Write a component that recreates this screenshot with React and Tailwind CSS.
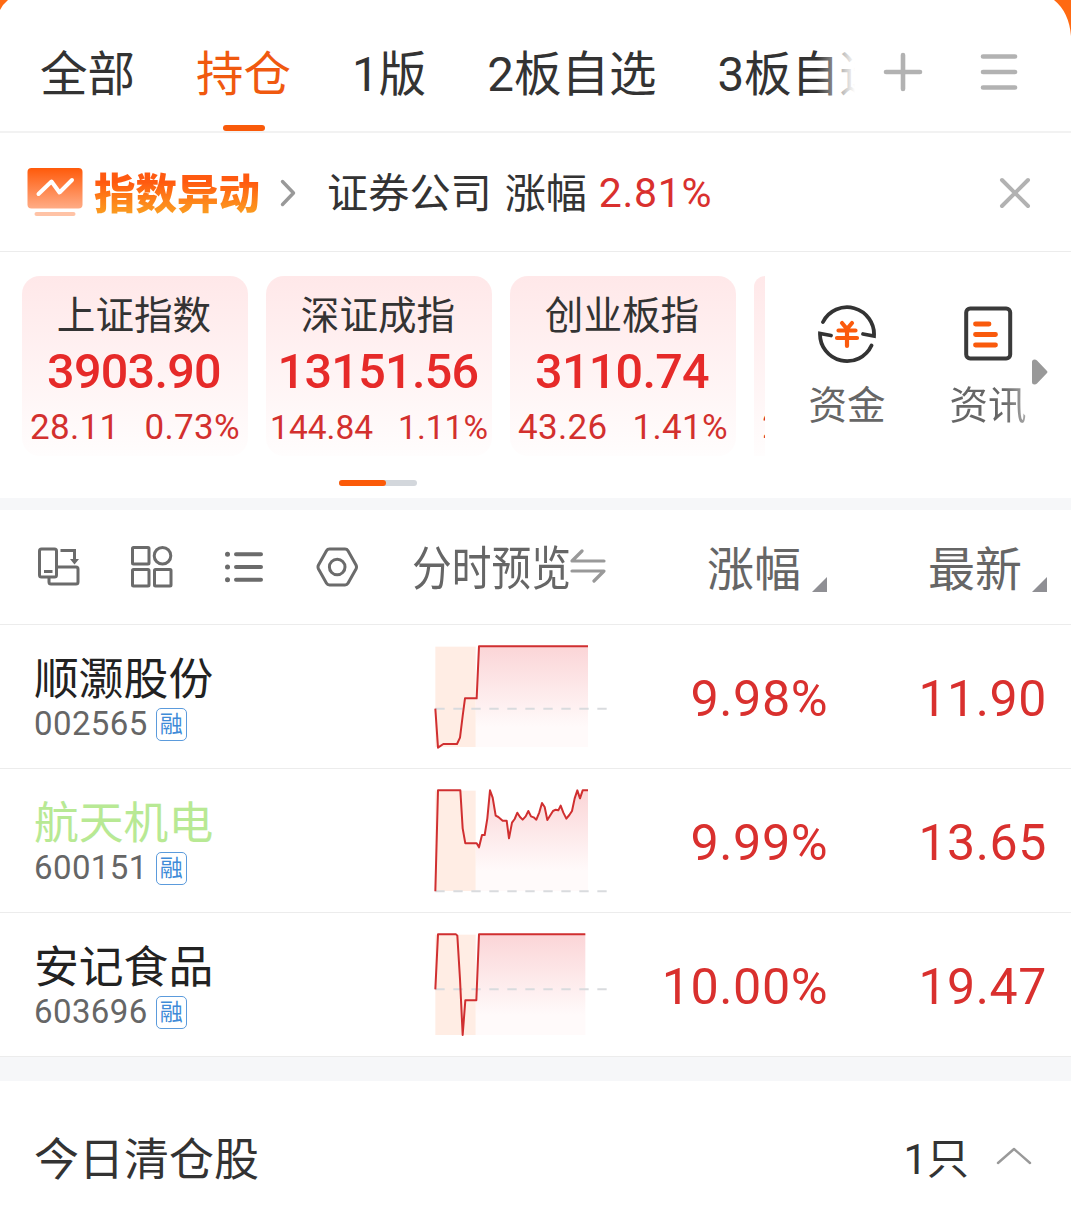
const TABS = ['全部', '持仓', '1版', '2板自选', '3板自选']

const INDICES = [
  { name: '上证指数', value: '3903.90', change: '28.11', pct: '0.73%' },
  { name: '深证成指', value: '13151.56', change: '144.84', pct: '1.11%' },
  { name: '创业板指', value: '3110.74', change: '43.26', pct: '1.41%' },
]

// chart coordinates live in a 600 x 390 box, the price line ends at `end`
const STOCKS = [
  {
    name: '顺灏股份',
    code: '002565',
    pct: '9.98%',
    price: '11.90',
    end: 504,
    base: 233,
    line: '46,233 54,350 70,339 111,339 120,320 128,255 135,202 170,202 177,46 504,46',
  },
  {
    name: '航天机电',
    code: '600151',
    pct: '9.99%',
    price: '13.65',
    held: true,
    end: 504,
    base: 349,
    line: '46,349 54,46 121,46 128,160 136,205 170,205 177,217 186,180 194,180 202,130 210,46 218,68 227,122 235,126 248,137 260,137 267,190 276,143 284,132 292,113 300,126 308,134 317,124 325,108 333,124 341,127 349,134 358,112 366,84 374,96 382,135 390,122 399,108 407,104 415,106 422,92 430,113 439,131 448,120 456,108 464,70 472,46 480,70 488,46 504,46',
  },
  {
    name: '安记食品',
    code: '603696',
    pct: '10.00%',
    price: '19.47',
    end: 496,
    base: 211,
    line: '46,211 54,46 108,46 112,50 120,180 128,348 136,244 169,244 177,46 496,46',
  },
]

function Tabs() {
  return (
    <div className="flex h-[133px] items-center border-b-2 border-[#f2f2f2] pl-10">
      <div className="relative h-full w-[815px] shrink-0 overflow-hidden">
        <div className="flex h-full w-max gap-[61px]">
          {TABS.map((tab) => (
            <div
              key={tab}
              className={`relative flex h-full shrink-0 items-center pt-[21px] text-[47.5px] leading-none ${
                tab === '持仓' ? 'text-[#f0590f]' : 'text-[#333]'
              }`}
            >
              {tab}
              {tab === '持仓' && (
                <span className="absolute bottom-0 left-1/2 h-[6px] w-[42px] -translate-x-1/2 rounded-full bg-[#f95a0a]" />
              )}
            </div>
          ))}
        </div>
        <div className="absolute inset-y-0 right-0 w-[48px] bg-linear-to-r from-white/0 from-20% to-white" />
      </div>
      <svg viewBox="0 0 40 40" className="ml-7 mt-3 size-10 shrink-0" stroke="#b2b2b2" strokeWidth="4.6" strokeLinecap="round">
        <path d="M3 20h34M20 3v34" />
      </svg>
      <svg viewBox="0 0 40 40" className="ml-14 mt-3 size-10 shrink-0" stroke="#b2b2b2" strokeWidth="4.6" strokeLinecap="round">
        <path d="M4 4.500h32M4 20h32M4 35.500h32" />
      </svg>
    </div>
  )
}

function AlertBar() {
  return (
    <div className="flex h-[119px] items-center border-b border-[#ececec] pl-[27px] pr-10">
      <svg viewBox="0 0 56 50" className="h-[50px] w-14 shrink-0" fill="none">
        <defs>
          <linearGradient id="alert" x1="0" y1="0" x2="0" y2="1">
            <stop offset="0" stopColor="#ff5a0a" />
            <stop offset="1" stopColor="#ffac86" />
          </linearGradient>
        </defs>
        <rect x="0.500" y="1" width="55" height="40.500" rx="4" fill="url(#alert)" />
        <path d="M11.500 27l13-12.500 8 11L45 13" stroke="#fff" strokeWidth="4" strokeLinecap="round" strokeLinejoin="round" />
        <rect x="7.500" y="45" width="41" height="4" rx="2" fill="#ffc3a6" />
      </svg>
      <span className="ml-[11px] mt-[5px] bg-linear-to-b from-[#ff5a10] from-25% to-[#fb9a20] to-85% bg-clip-text text-[41.500px] font-black leading-[50px] text-transparent">
        指数异动
      </span>
      <svg viewBox="0 0 16 28" className="ml-5 mt-px h-7 w-4" fill="none" stroke="#999" strokeWidth="3.400" strokeLinecap="round" strokeLinejoin="round">
        <path d="M2.500 2.500l11 11.500-11 11.500" />
      </svg>
      <span className="ml-[31px] mt-[4px] text-[41.200px] leading-[50px] text-[#333]">证券公司</span>
      <span className="ml-[13px] mt-[4px] text-[41px] leading-[50px] text-[#333]">涨幅</span>
      <span className="ml-3 mt-px text-[41px] leading-[50px] tracking-[0.7px] text-[#d9302e]">2.81%</span>
      <svg viewBox="0 0 32 32" className="ml-auto mt-0.5 size-8" stroke="#b2b2b2" strokeWidth="4" strokeLinecap="round">
        <path d="M3 3l26 26M29 3L3 29" />
      </svg>
    </div>
  )
}

function IndexCard({ item }) {
  // long numbers get a slightly smaller bottom line so they stay inside the card
  const long = item.change.length > 5
  return (
    <div className="flex h-[180px] w-[226px] shrink-0 flex-col items-center rounded-[18px] bg-linear-to-b from-[#ffe8e9] to-[#fffdfd] pt-[17px]">
      <span className="-ml-[2px] text-[38.600px] leading-[46px] text-[#333]">{item.name}</span>
      <span className="-ml-[2px] mt-[6px] text-[48.500px] font-medium leading-[54px] tracking-[-0.7px] text-[#e62a29]">{item.value}</span>
      <div
        className={`mt-1.5 flex gap-[25px] whitespace-nowrap leading-[46px] text-[#d3302e] ${
          long ? 'text-[33.500px]' : 'text-[35px] tracking-[0.3px]'
        }`}
      >
        <span>{item.change}</span>
        <span>{item.pct}</span>
      </div>
    </div>
  )
}

function FundIcon() {
  return (
    <svg viewBox="0 0 60 60" className="size-[60px]" fill="none" strokeLinecap="round" strokeLinejoin="round">
      <g stroke="#333" strokeWidth="3.800" strokeLinejoin="miter">
        <path d="M6 18A27 27 0 0 1 57 32l-11-2" />
        <path d="M54.500 41.500A27 27 0 0 1 3 29.500l11 2" />
      </g>
      <path d="M25 19l5 6 5-6M21.500 26.500h17M20 34h20M30 27v15" stroke="#fb5a0c" strokeWidth="4.200" />
    </svg>
  )
}

function NewsIcon() {
  return (
    <svg viewBox="0 0 60 60" className="size-[60px]" fill="none" strokeLinecap="round">
      <rect x="8.200" y="4.500" width="44" height="50" rx="4" stroke="#3a3a3a" strokeWidth="4" />
      <path d="M17.500 20h13.500M17.500 30.500h20M17.500 41h20" stroke="#f95a0c" strokeWidth="4.800" />
    </svg>
  )
}

function IndexPanel() {
  return (
    <div className="h-[246px] pt-6">
      <div className="flex">
        <div className="flex w-[765px] shrink-0 gap-[18px] overflow-hidden pl-[22px]">
          {INDICES.map((item) => (
            <IndexCard key={item.name} item={item} />
          ))}
          <div className="flex h-[180px] w-[11px] shrink-0 items-end overflow-hidden rounded-tl-[18px] bg-linear-to-b from-[#ffe8e9] to-[#fffdfd] pb-1.5 pl-[8px] text-[35px] leading-[46px] text-[#d3302e]">
            2
          </div>
        </div>
        <div className="relative flex flex-1 gap-[63px] pl-[43px] pt-7 text-[38.500px] leading-[46px] text-[#666]">
          <div className="flex w-[78px] shrink-0 flex-col items-center gap-[19px]">
            <FundIcon />
            资金
          </div>
          <div className="flex w-[78px] shrink-0 flex-col items-center gap-[19px]">
            <NewsIcon />
            <span className="bg-linear-to-r from-[#666] from-70% to-[#aaa] bg-clip-text text-transparent">资讯</span>
          </div>
          <svg viewBox="0 0 16 26" className="absolute left-[267px] top-[83px] h-[26px] w-4" fill="#999">
            <path d="M0 3Q0 .5 2.500 .5Q4 .5 5 1.500L15 12Q16 13 15 14L5 24.500Q4 25.500 2.500 25.500Q0 25.500 0 23Z" />
          </svg>
        </div>
      </div>
      <div className="ml-[339px] mt-6 h-[6px] w-[78px] rounded-full bg-[#d3d7dc]">
        <div className="h-full w-[47px] rounded-full bg-[#fb5a08]" />
      </div>
    </div>
  )
}

function SortMark() {
  return (
    <svg viewBox="0 0 15 15" className="mb-8 size-[15px] self-end" fill="#8f8f94">
      <path d="M15 0v15H0z" />
    </svg>
  )
}

function ListHeader() {
  return (
    <div className="flex h-[115px] items-center border-b border-[#ececec] pl-[38px] pr-6 text-[47px] leading-none text-[#666]">
      <div className="flex w-[374px] shrink-0 gap-[50.500px]">
        <svg viewBox="0 0 42 42" className="size-[42px]" fill="none" stroke="#6b6b6b" strokeWidth="3">
          <rect x="1.500" y="3" width="17" height="28" rx="2" />
          <path d="M6 25.500h8.500M11 31.500v4.500q0 2 2 2h25q2 0 2-2V23q0-2-2-2H19" />
          <path d="M22.500 4.500h14v10" />
          <path d="M32 13h9l-4.500 5.500z" fill="#6b6b6b" stroke="none" />
        </svg>
        <svg viewBox="0 0 42 42" className="size-[42px]" fill="none" stroke="#6b6b6b" strokeWidth="3">
          <rect x="1.500" y="1.500" width="16.500" height="16.500" rx="1" />
          <circle cx="31.500" cy="9.800" r="8.300" />
          <rect x="1.500" y="23.500" width="16.500" height="16.500" rx="1" />
          <rect x="23.500" y="23.500" width="16.500" height="16.500" rx="1" />
        </svg>
        <svg viewBox="0 0 42 42" className="size-[42px]" fill="none" stroke="#6b6b6b" strokeWidth="4" strokeLinecap="round">
          <path d="M13 8.300h25M13 21h25M13 33.800h25" />
          <path d="M4.500 8.200h.01M4.500 21h.01M4.500 33.800h.01" strokeWidth="5" />
        </svg>
        <svg viewBox="0 0 42 42" className="size-[42px]" fill="none" stroke="#6b6b6b" strokeWidth="3" strokeLinejoin="round">
          <path d="M13.500 3h15.500q2 0 3 1.700l8 14.300q1 2 0 4l-8 14.300q-1 1.700-3 1.700H13.500q-2 0-3-1.700l-8-14.300q-1-2 0-4l8-14.300q1-1.700 3-1.700z" />
          <circle cx="21.200" cy="21" r="7.800" />
        </svg>
      </div>
      <div className="w-[158px] shrink-0 pt-[3px]">
        <span className="block w-max origin-left scale-x-[0.845]">分时预览</span>
      </div>
      <svg viewBox="0 0 36 34" className="-mt-[3px] h-[34px] w-9 shrink-0" fill="none" stroke="#999" strokeWidth="3.200" strokeLinecap="round" strokeLinejoin="round">
        <path d="M34 12H2L12 2M2 22h32L24 32" />
      </svg>
      <div className="ml-[101px] flex h-full items-center gap-[11px]">
        <span className="pt-[4px]">涨幅</span>
        <SortMark />
      </div>
      <div className="ml-auto flex h-full items-center gap-[10px]">
        <span className="pt-[4px]">最新</span>
        <SortMark />
      </div>
    </div>
  )
}

function Sparkline({ stock }) {
  const { line, end, base } = stock
  return (
    <svg viewBox="0 0 600 390" className="mb-[2px] h-[130px] w-[200px] shrink-0" fill="none">
      <defs>
        <linearGradient id="area" gradientUnits="userSpaceOnUse" x1="0" y1="46" x2="0" y2="348">
          <stop offset="0" stopColor="#fbd5d7" />
          <stop offset="0.800" stopColor="#fffafa" />
          <stop offset="1" stopColor="#fffafa" />
        </linearGradient>
        <clipPath id={`late-${stock.code}`}>
          <rect x="167" y="0" width="433" height="390" />
        </clipPath>
      </defs>
      <polygon points={`${line} ${end},348 46,348`} fill="url(#area)" clipPath={`url(#late-${stock.code})`} />
      <rect x="46" y="47" width="121" height="301" fill="#ffede4" />
      <path d={`M46 ${base}H560`} stroke="#d9dbde" strokeWidth="6" strokeDasharray="28 26" />
      <polyline points={line} stroke="#d02f30" strokeWidth="6" strokeLinejoin="round" />
    </svg>
  )
}

function StockRow({ stock }) {
  return (
    <div className="flex h-36 items-center border-b border-[#ececec] pl-[34px] pr-6">
      <div className="w-[386px] shrink-0">
        <div className={`pt-[3px] text-[44.800px] leading-[52px] ${stock.held ? 'text-[#b8e994]' : 'text-[#222]'}`}>{stock.name}</div>
        <div className="flex items-center gap-2 text-[33px] leading-[36px] tracking-[0.4px] text-[#666]">
          {stock.code}
          <span className="flex h-[33px] w-[31px] items-center justify-center rounded-[5px] border-[1.500px] border-[#5b9bdc] text-[23px] leading-none tracking-normal text-[#3f8bd8]">
            融
          </span>
        </div>
      </div>
      <Sparkline stock={stock} />
      <span className="mt-[5px] w-[208px] shrink-0 text-right text-[50.300px] leading-none tracking-[0.5px] text-[#d9302e]">{stock.pct}</span>
      <span className="ml-auto mt-[5px] text-[50px] leading-none tracking-[0.6px] text-[#d9302e]">{stock.price}</span>
    </div>
  )
}

function ClearedToday() {
  return (
    <div className="flex h-[143px] items-center pl-[34px] pr-[39px] pt-[15px] text-[45px] leading-none text-[#333]">
      今日清仓股
      <span className="ml-auto text-[42px]">1只</span>
      <svg viewBox="0 0 36 18" className="mb-[9px] ml-[27px] h-[18px] w-9" fill="none" stroke="#999" strokeWidth="2.400" strokeLinecap="round" strokeLinejoin="round">
        <path d="M2 16L18 2l16 14" />
      </svg>
    </div>
  )
}

function App() {
  return (
    <div className="relative h-[1224px] w-[1071px] overflow-hidden bg-white font-['Roboto','Noto_Sans_CJK_SC',sans-serif]">
      <svg viewBox="0 0 8 10" className="absolute left-0 top-0 h-[10px] w-2" fill="#ff6a13">
        <path d="M0 0h8Q3 4 0 10z" />
      </svg>
      <svg viewBox="0 0 17 36" className="absolute right-0 top-0 h-9 w-[17px]" fill="#ff6a13">
        <path d="M0 0h17v36Q15 12 0 0z" />
      </svg>
      <Tabs />
      <AlertBar />
      <IndexPanel />
      <div className="h-3 bg-[#f6f7f9]" />
      <ListHeader />
      {STOCKS.map((stock) => (
        <StockRow key={stock.code} stock={stock} />
      ))}
      <div className="h-6 bg-[#f6f7f9]" />
      <ClearedToday />
    </div>
  )
}

export default App
